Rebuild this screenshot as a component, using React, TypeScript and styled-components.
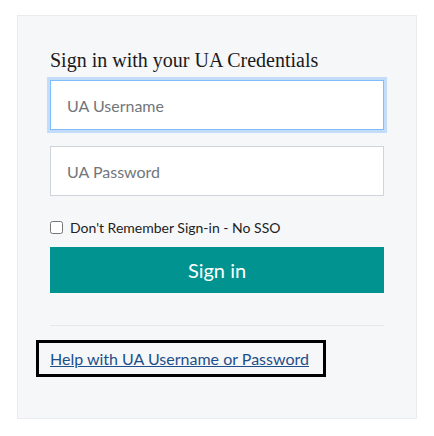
import React from 'react'
import styled, { createGlobalStyle } from 'styled-components'

const GlobalStyle = createGlobalStyle`
  body {
    margin: 0;
    background: #ffffff;
    font-family: Lato, 'Liberation Sans', sans-serif;
  }
`

const Panel = styled.div`
  box-sizing: border-box;
  width: 400px;
  height: 404px;
  margin: 15px 0 0 17px;
  padding: 32px 32px 0 32px;
  background: #f6f7f9;
  border: 1px solid #e9ebee;
`

const Heading = styled.h2`
  margin: 0 0 8px 0;
  font-family: 'Liberation Serif', serif;
  font-weight: normal;
  font-size: 20px;
  line-height: 24px;
  color: #1a1a1a;
`

const Input = styled.input<{ $focused?: boolean }>`
  box-sizing: border-box;
  display: block;
  width: 334px;
  height: 50px;
  margin: 0 0 16px 0;
  padding: 0 16px;
  font-family: Lato, 'Liberation Sans', sans-serif;
  font-size: 16px;
  color: #333;
  background: #fff;
  border: 1px solid ${p => (p.$focused ? '#80bdff' : '#cfd4da')};
  box-shadow: ${p => (p.$focused ? '0 0 0 3px #c2dcfa' : 'none')};
  outline: none;
  border-radius: 0;

  &::placeholder {
    color: #72767b;
  }
`

const CheckRow = styled.label`
  display: flex;
  align-items: center;
  gap: 7px;
  height: 20px;
  margin: 21px 0 10px 0;
  font-size: 14px;
  color: #222;
`

const Check = styled.input`
  width: 13px;
  height: 13px;
  margin: 0;
`

const Button = styled.button`
  display: block;
  width: 334px;
  height: 46px;
  border: none;
  background: #009390;
  color: #fff;
  font-family: Lato, 'Liberation Sans', sans-serif;
  font-size: 20px;
  cursor: pointer;
`

const Divider = styled.hr`
  width: 334px;
  margin: 32px 0 14px 0;
  border: none;
  border-top: 1px solid #e6e8ea;
`

const HelpBox = styled.div`
  box-sizing: border-box;
  width: 290px;
  height: 37px;
  margin-left: -14px;
  padding: 0 0 0 11px;
  display: flex;
  align-items: center;
  border: 3px solid #000;
`

const HelpLink = styled.a`
  font-size: 16px;
  color: #1e4f8a;
  text-decoration: underline;
`

export default function App() {
  return (
    <>
      <GlobalStyle />
      <Panel>
        <Heading>Sign in with your UA Credentials</Heading>
        <Input $focused autoFocus placeholder="UA Username" />
        <Input type="password" placeholder="UA Password" />
        <CheckRow>
          <Check type="checkbox" />
          Don't Remember Sign-in - No SSO
        </CheckRow>
        <Button>Sign in</Button>
        <Divider />
        <HelpBox>
          <HelpLink href="#">Help with UA Username or Password</HelpLink>
        </HelpBox>
      </Panel>
    </>
  )
}
